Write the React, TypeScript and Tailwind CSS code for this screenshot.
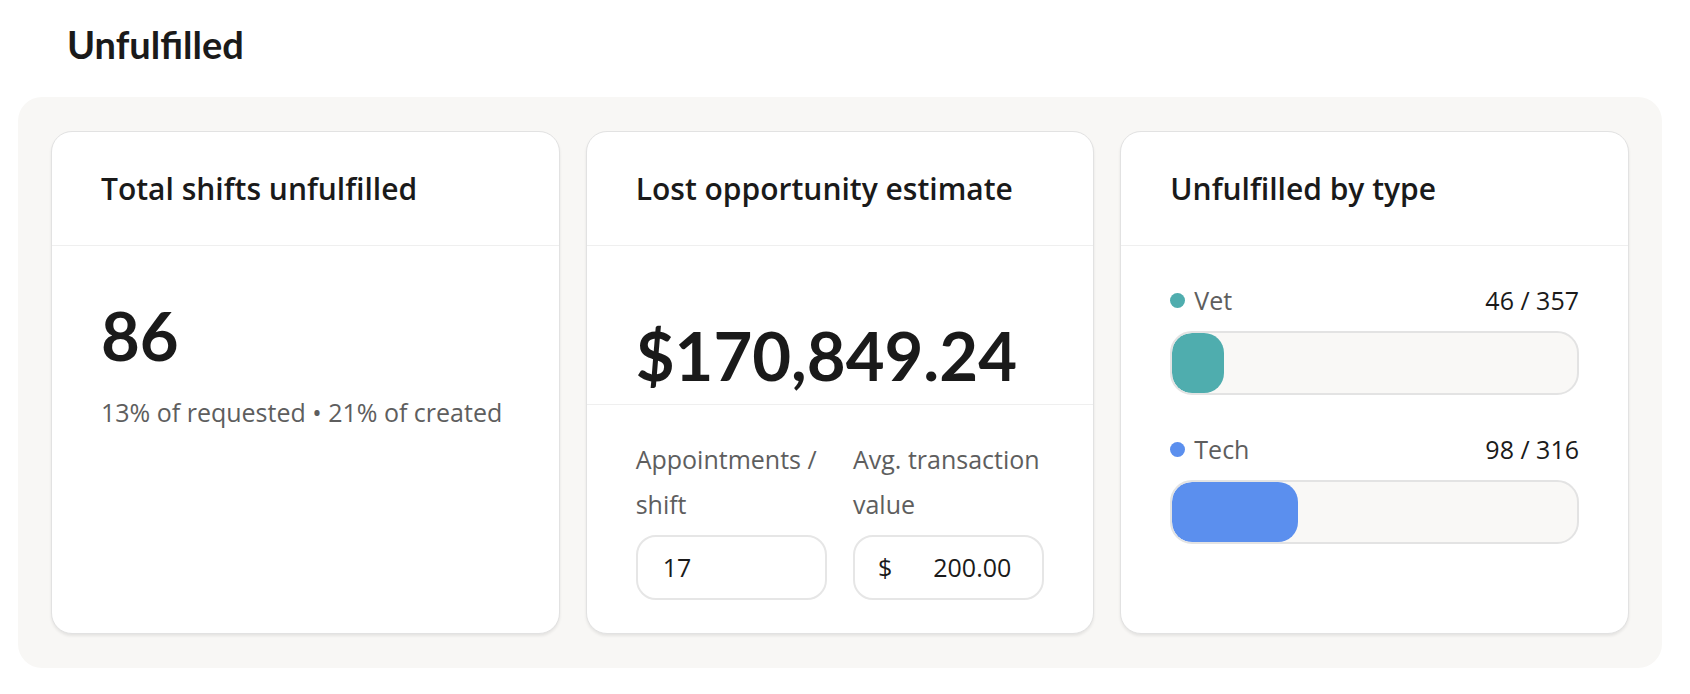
import React from "react";

type Row = { label: string; value: number; total: number; color: string };

const rows: Row[] = [
  { label: "Vet", value: 46, total: 357, color: "bg-[#4fadae]" },
  { label: "Tech", value: 98, total: 316, color: "bg-[#5b8fee]" },
];

function Card({ title, children }: { title: string; children: React.ReactNode }) {
  return (
    <div className="flex flex-col overflow-hidden rounded-[21px] border border-[#e2e2e2] bg-white shadow-[0_2px_3px_rgba(0,0,0,0.08)]">
      <div className="flex h-[114px] shrink-0 items-center border-b border-[#efefef] px-[49px] text-[30px] font-semibold leading-[40px] text-[#1a1a1a]">
        {title}
      </div>
      {children}
    </div>
  );
}

export default function App() {
  return (
    <div className="min-h-[694px] bg-white pl-[18px] pt-[25px] font-['Open_Sans',sans-serif] text-[#1a1a1a]">
      <h1 className="ml-[49px] font-['Lato',sans-serif] text-[38px] font-bold leading-[38px] text-[#1a1a1a]">
        Unfulfilled
      </h1>
      <div className="mt-[34px] w-[1644px] rounded-[24px] bg-[#f8f7f5] px-[33px] py-[34px]">
        <div className="grid grid-cols-3 gap-[26px]">
          <Card title="Total shifts unfulfilled">
            <div className="px-[49px] pt-[56px]">
              <div className="font-['Lato',sans-serif] text-[67px] font-bold leading-[67px] text-[#1a1a1a]">86</div>
              <div className="mt-[25px] text-[25px] leading-[36px] text-[#5e5e5e]">
                13% of requested • 21% of created
              </div>
            </div>
          </Card>

          <Card title="Lost opportunity estimate">
            <div className="h-[159px] shrink-0 border-b border-[#efefef] px-[49px] pt-[76px]">
              <div className="font-['Lato',sans-serif] text-[67px] font-bold leading-[66px] text-[#1a1a1a]">
                $170,849.24
              </div>
            </div>
            <div className="grid grid-cols-2 gap-x-[26px] px-[49px] pb-[33px] pt-[32px]">
              <div>
                <div className="whitespace-nowrap text-[25px] leading-[45px] text-[#5e5e5e]">
                  Appointments /<br />shift
                </div>
                <div className="mt-[8px] flex h-[65px] items-center rounded-[20px] border-2 border-[#e6e6e6] pl-[25px] text-[25px] text-[#1a1a1a]">
                  17
                </div>
              </div>
              <div>
                <div className="whitespace-nowrap text-[25px] leading-[45px] text-[#5e5e5e]">
                  Avg. transaction<br />value
                </div>
                <div className="mt-[8px] flex h-[65px] items-center justify-between rounded-[20px] border-2 border-[#e6e6e6] pl-[23px] pr-[31px] text-[25px] text-[#1a1a1a]">
                  <span>$</span>
                  <span>200.00</span>
                </div>
              </div>
            </div>
          </Card>

          <Card title="Unfulfilled by type">
            <div className="flex flex-col gap-[36px] px-[49px] pt-[36px]">
              {rows.map((r) => (
                <div key={r.label}>
                  <div className="flex items-center justify-between text-[25px] leading-[36px]">
                    <div className="flex items-center gap-[9px]">
                      <span className={`h-[15px] w-[15px] rounded-full ${r.color}`} />
                      <span className="text-[#5e5e5e]">{r.label}</span>
                    </div>
                    <span className="text-[#1a1a1a]">
                      {r.value} / {r.total}
                    </span>
                  </div>
                  <div className="mt-[13px] h-[64px] overflow-hidden rounded-[22px] border-2 border-[#e3e3e3] bg-[#f9f8f6]">
                    <div
                      className={`h-full rounded-[20px] ${r.color}`}
                      style={{ width: `${(r.value / r.total) * 100}%` }}
                    />
                  </div>
                </div>
              ))}
            </div>
          </Card>
        </div>
      </div>
    </div>
  );
}
